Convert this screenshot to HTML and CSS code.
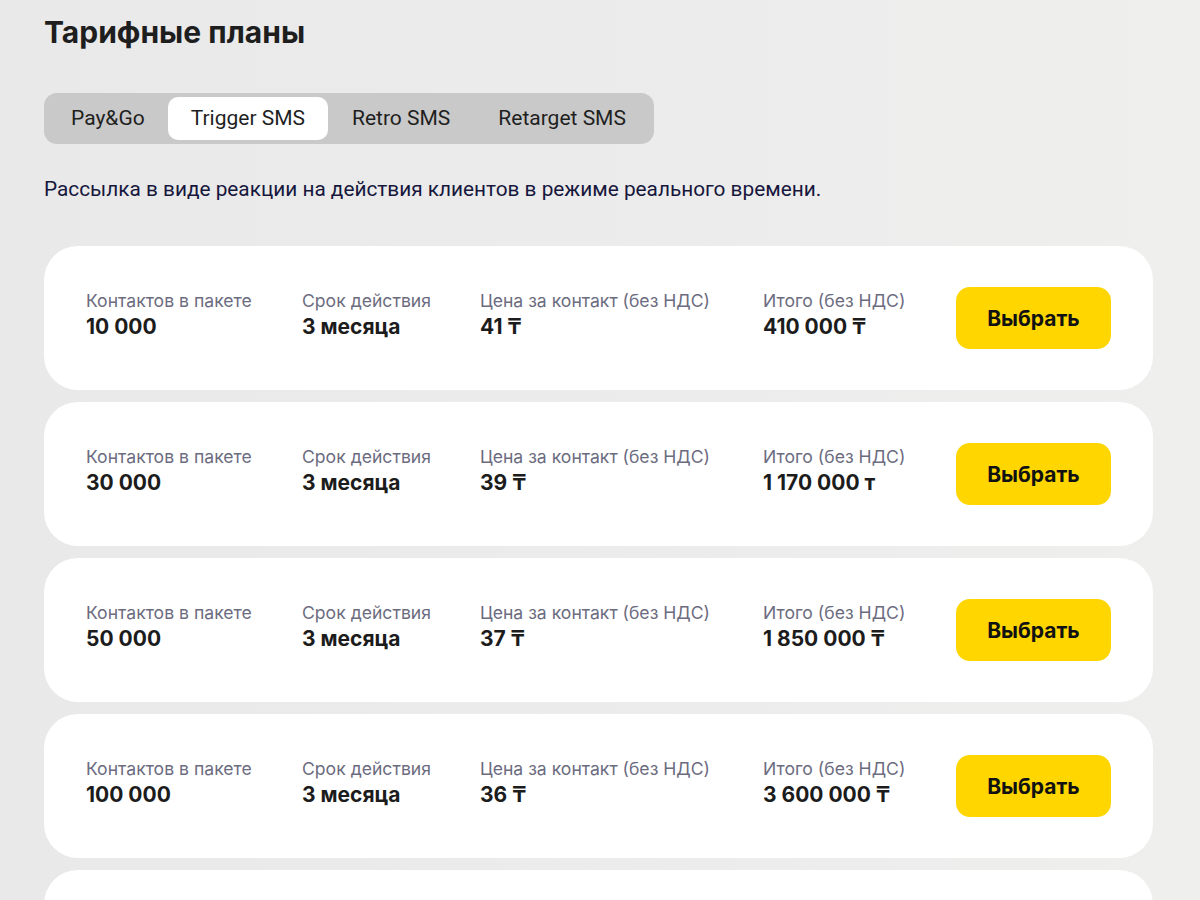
FILE: index.html
```html
<!DOCTYPE html>
<html lang="ru">
<head>
  <meta charset="UTF-8">
  <meta name="viewport" content="width=device-width, initial-scale=1.0">
  <title>Тарифные планы</title>
  <link rel="stylesheet" href="styles.css">
</head>
<body>
  <h1>Тарифные планы</h1>

  <div class="tabs">
    <div class="tab">Pay&amp;Go</div>
    <div class="tab active">Trigger SMS</div>
    <div class="tab">Retro SMS</div>
    <div class="tab">Retarget SMS</div>
  </div>

  <p class="description">Рассылка в виде реакции на действия клиентов в режиме реального времени.</p>

  <div class="plans">
    <div class="plan">
      <div class="cell"><div class="label">Контактов в пакете</div><div class="value">10 000</div></div>
      <div class="cell"><div class="label">Срок действия</div><div class="value">3 месяца</div></div>
      <div class="cell"><div class="label">Цена за контакт (без НДС)</div><div class="value">41 ₸</div></div>
      <div class="cell"><div class="label">Итого (без НДС)</div><div class="value">410 000 ₸</div></div>
      <button>Выбрать</button>
    </div>

    <div class="plan">
      <div class="cell"><div class="label">Контактов в пакете</div><div class="value">30 000</div></div>
      <div class="cell"><div class="label">Срок действия</div><div class="value">3 месяца</div></div>
      <div class="cell"><div class="label">Цена за контакт (без НДС)</div><div class="value">39 ₸</div></div>
      <div class="cell"><div class="label">Итого (без НДС)</div><div class="value">1 170 000 т</div></div>
      <button>Выбрать</button>
    </div>

    <div class="plan">
      <div class="cell"><div class="label">Контактов в пакете</div><div class="value">50 000</div></div>
      <div class="cell"><div class="label">Срок действия</div><div class="value">3 месяца</div></div>
      <div class="cell"><div class="label">Цена за контакт (без НДС)</div><div class="value">37 ₸</div></div>
      <div class="cell"><div class="label">Итого (без НДС)</div><div class="value">1 850 000 ₸</div></div>
      <button>Выбрать</button>
    </div>

    <div class="plan">
      <div class="cell"><div class="label">Контактов в пакете</div><div class="value">100 000</div></div>
      <div class="cell"><div class="label">Срок действия</div><div class="value">3 месяца</div></div>
      <div class="cell"><div class="label">Цена за контакт (без НДС)</div><div class="value">36 ₸</div></div>
      <div class="cell"><div class="label">Итого (без НДС)</div><div class="value">3 600 000 ₸</div></div>
      <button>Выбрать</button>
    </div>

    <div class="plan">
      <div class="cell"><div class="label">Контактов в пакете</div><div class="value">300 000</div></div>
      <div class="cell"><div class="label">Срок действия</div><div class="value">3 месяца</div></div>
      <div class="cell"><div class="label">Цена за контакт (без НДС)</div><div class="value">34 ₸</div></div>
      <div class="cell"><div class="label">Итого (без НДС)</div><div class="value">10 200 000 ₸</div></div>
      <button>Выбрать</button>
    </div>
  </div>
</body>
</html>
```

FILE: styles.css
```css
body {
  font-family: Inter, "Noto Sans", sans-serif;
  color: #1c1c1c;
  background: linear-gradient(90deg, #e9e9e9 0%, #ececec 60%, #efefee 100%);
  margin: 0;
  padding: 0 47px 0 44px;
  overflow: hidden;
}

h1 {
  font-size: 30px;
  font-weight: 700;
  line-height: 36px;
  margin: 14px 0 0;
  color: #1e1e1e;
}

.tabs {
  display: inline-flex;
  margin-top: 43px;
  padding: 4px;
  background-color: #c9c9c9;
  border-radius: 13px;
}

.tab {
  font-family: Roboto, "Noto Sans", sans-serif;
  font-size: 21px;
  color: #1f1f1f;
  padding: 0 23px;
  height: 43px;
  line-height: 43px;
  border-radius: 10px;
}

.tab.active {
  background-color: #fff;
}

.tab:nth-child(n+3) {
  padding: 0 24px;
}

.description {
  font-family: Roboto, "Noto Sans", sans-serif;
  font-size: 20.8px;
  color: #17173d;
  margin: 33px 0 0;
  line-height: 24px;
}

.plans {
  margin-top: 45px;
  display: flex;
  flex-direction: column;
  gap: 12px;
}

.plan {
  background-color: #fff;
  border-radius: 34px;
  height: 144px;
  padding: 0 42px;
  display: grid;
  grid-template-columns: 216px 178px 283px 193px auto;
  align-items: center;
}

.cell {
  padding-bottom: 7px;
}

.label {
  font-size: 17.6px;
  color: #6c6c80;
  line-height: 24px;
}

.value {
  font-size: 21px;
  font-weight: 700;
  line-height: 28px;
  color: #1c1c1c;
}

button {
  font-family: Inter, "Noto Sans", sans-serif;
  width: 155px;
  height: 62px;
  background-color: #ffd600;
  color: #111;
  border: none;
  border-radius: 14px;
  font-size: 21px;
  font-weight: 700;
  cursor: pointer;
  justify-self: start;
}
```
